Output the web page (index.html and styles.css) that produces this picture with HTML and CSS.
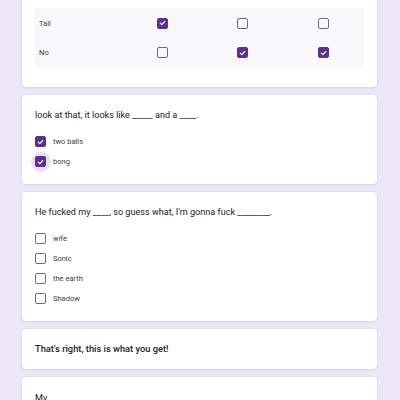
FILE: index.html
```html
<!DOCTYPE html>
<html>
<head>
<meta charset="utf-8">
<link rel="stylesheet" href="styles.css">
</head>
<body>
<div class="form">
  <div class="card card-grid">
    <div class="matrix">
      <div class="mrow">
        <div class="mlabel">Tall</div>
        <div class="mcell"><span class="cb on"><svg viewBox="0 0 12 12"><path d="M3 6.2 L5.1 8.2 L9 4"/></svg></span></div>
        <div class="mcell"><span class="cb"></span></div>
        <div class="mcell"><span class="cb"></span></div>
      </div>
      <div class="mrow">
        <div class="mlabel">No</div>
        <div class="mcell"><span class="cb"></span></div>
        <div class="mcell"><span class="cb on"><svg viewBox="0 0 12 12"><path d="M3 6.2 L5.1 8.2 L9 4"/></svg></span></div>
        <div class="mcell"><span class="cb on"><svg viewBox="0 0 12 12"><path d="M3 6.2 L5.1 8.2 L9 4"/></svg></span></div>
      </div>
    </div>
  </div>

  <div class="card">
    <div class="question">look at that, it looks like _____ and a ____.</div>
    <div class="options">
      <div class="option"><span class="cb on"><svg viewBox="0 0 12 12"><path d="M3 6.2 L5.1 8.2 L9 4"/></svg></span><span class="olabel">two balls</span></div>
      <div class="option"><span class="halo"><span class="cb on"><svg viewBox="0 0 12 12"><path d="M3 6.2 L5.1 8.2 L9 4"/></svg></span></span><span class="olabel">bong</span></div>
    </div>
  </div>

  <div class="card">
    <div class="question">He fucked my ____, so guess what, I'm gonna fuck ________.</div>
    <div class="options">
      <div class="option"><span class="cb"></span><span class="olabel">wife</span></div>
      <div class="option"><span class="cb"></span><span class="olabel">Sonic</span></div>
      <div class="option"><span class="cb"></span><span class="olabel">the earth</span></div>
      <div class="option"><span class="cb"></span><span class="olabel">Shadow</span></div>
    </div>
  </div>

  <div class="card card-title">
    <div class="section">That's right, this is what you get!</div>
  </div>

  <div class="card card-last">
    <div class="question">My</div>
  </div>
</div>
</body>
</html>
```

FILE: styles.css
```css
html, body {
  margin: 0;
  padding: 0;
  height: 100%;
  overflow: hidden;
}
body {
  background: #ece7f6;
  font-family: Roboto, "Noto Sans", Arial, sans-serif;
  color: #202124;
}
.form {
  width: 355px;
  margin: -20px 0 0 22px;
  display: flex;
  flex-direction: column;
  gap: 8px;
}
.card {
  background: #fff;
  border-radius: 4px;
  box-shadow: 0 0 2px rgba(60, 40, 110, 0.10), 0 1px 3px rgba(60, 40, 110, 0.08);
  padding: 14px 13px 17px;
}
.card-grid {
  padding: 28px 13px 20px;
}
.matrix {
  background: #f8f8fa;
  display: flex;
  flex-direction: column;
}
.mrow {
  display: grid;
  grid-template-columns: 87px 1fr 1fr 1fr;
  align-items: center;
  height: 30px;
}
.mrow + .mrow {
  height: 29px;
}
.mlabel {
  font-size: 7.6px;
  color: #3c4043;
  padding-left: 4px;
}
.mcell {
  display: flex;
  justify-content: center;
}
.cb {
  box-sizing: border-box;
  width: 11px;
  height: 11px;
  border: 1.5px solid #6b6f74;
  border-radius: 2px;
  display: inline-flex;
  align-items: center;
  justify-content: center;
  flex: none;
}
.cb.on {
  background: #5b2e98;
  border-color: #5b2e98;
}
.cb svg {
  width: 10px;
  height: 10px;
  fill: none;
  stroke: #fff;
  stroke-width: 1.5;
  stroke-linecap: round;
  stroke-linejoin: round;
}
.halo {
  position: relative;
  display: inline-flex;
  isolation: isolate;
  flex: none;
}
.halo::before {
  content: "";
  position: absolute;
  left: 50%;
  top: 50%;
  width: 20px;
  height: 20px;
  margin: -10px 0 0 -10px;
  border-radius: 50%;
  background: #e9dff6;
  z-index: -1;
}
.question {
  font-size: 9.1px;
  line-height: 12px;
  color: #202124;
}
.options {
  display: flex;
  flex-direction: column;
  gap: 9px;
  margin-top: 15px;
}
.option {
  display: flex;
  align-items: center;
  gap: 7px;
  height: 11px;
}
.olabel {
  font-size: 7.5px;
  color: #3c4043;
}
.card-title {
  padding: 14px 13px 14px;
}
.section {
  font-size: 9.3px;
  line-height: 12px;
  font-weight: 500;
  color: #202124;
}
.card-last {
  padding: 15px 13px 30px;
}
```
